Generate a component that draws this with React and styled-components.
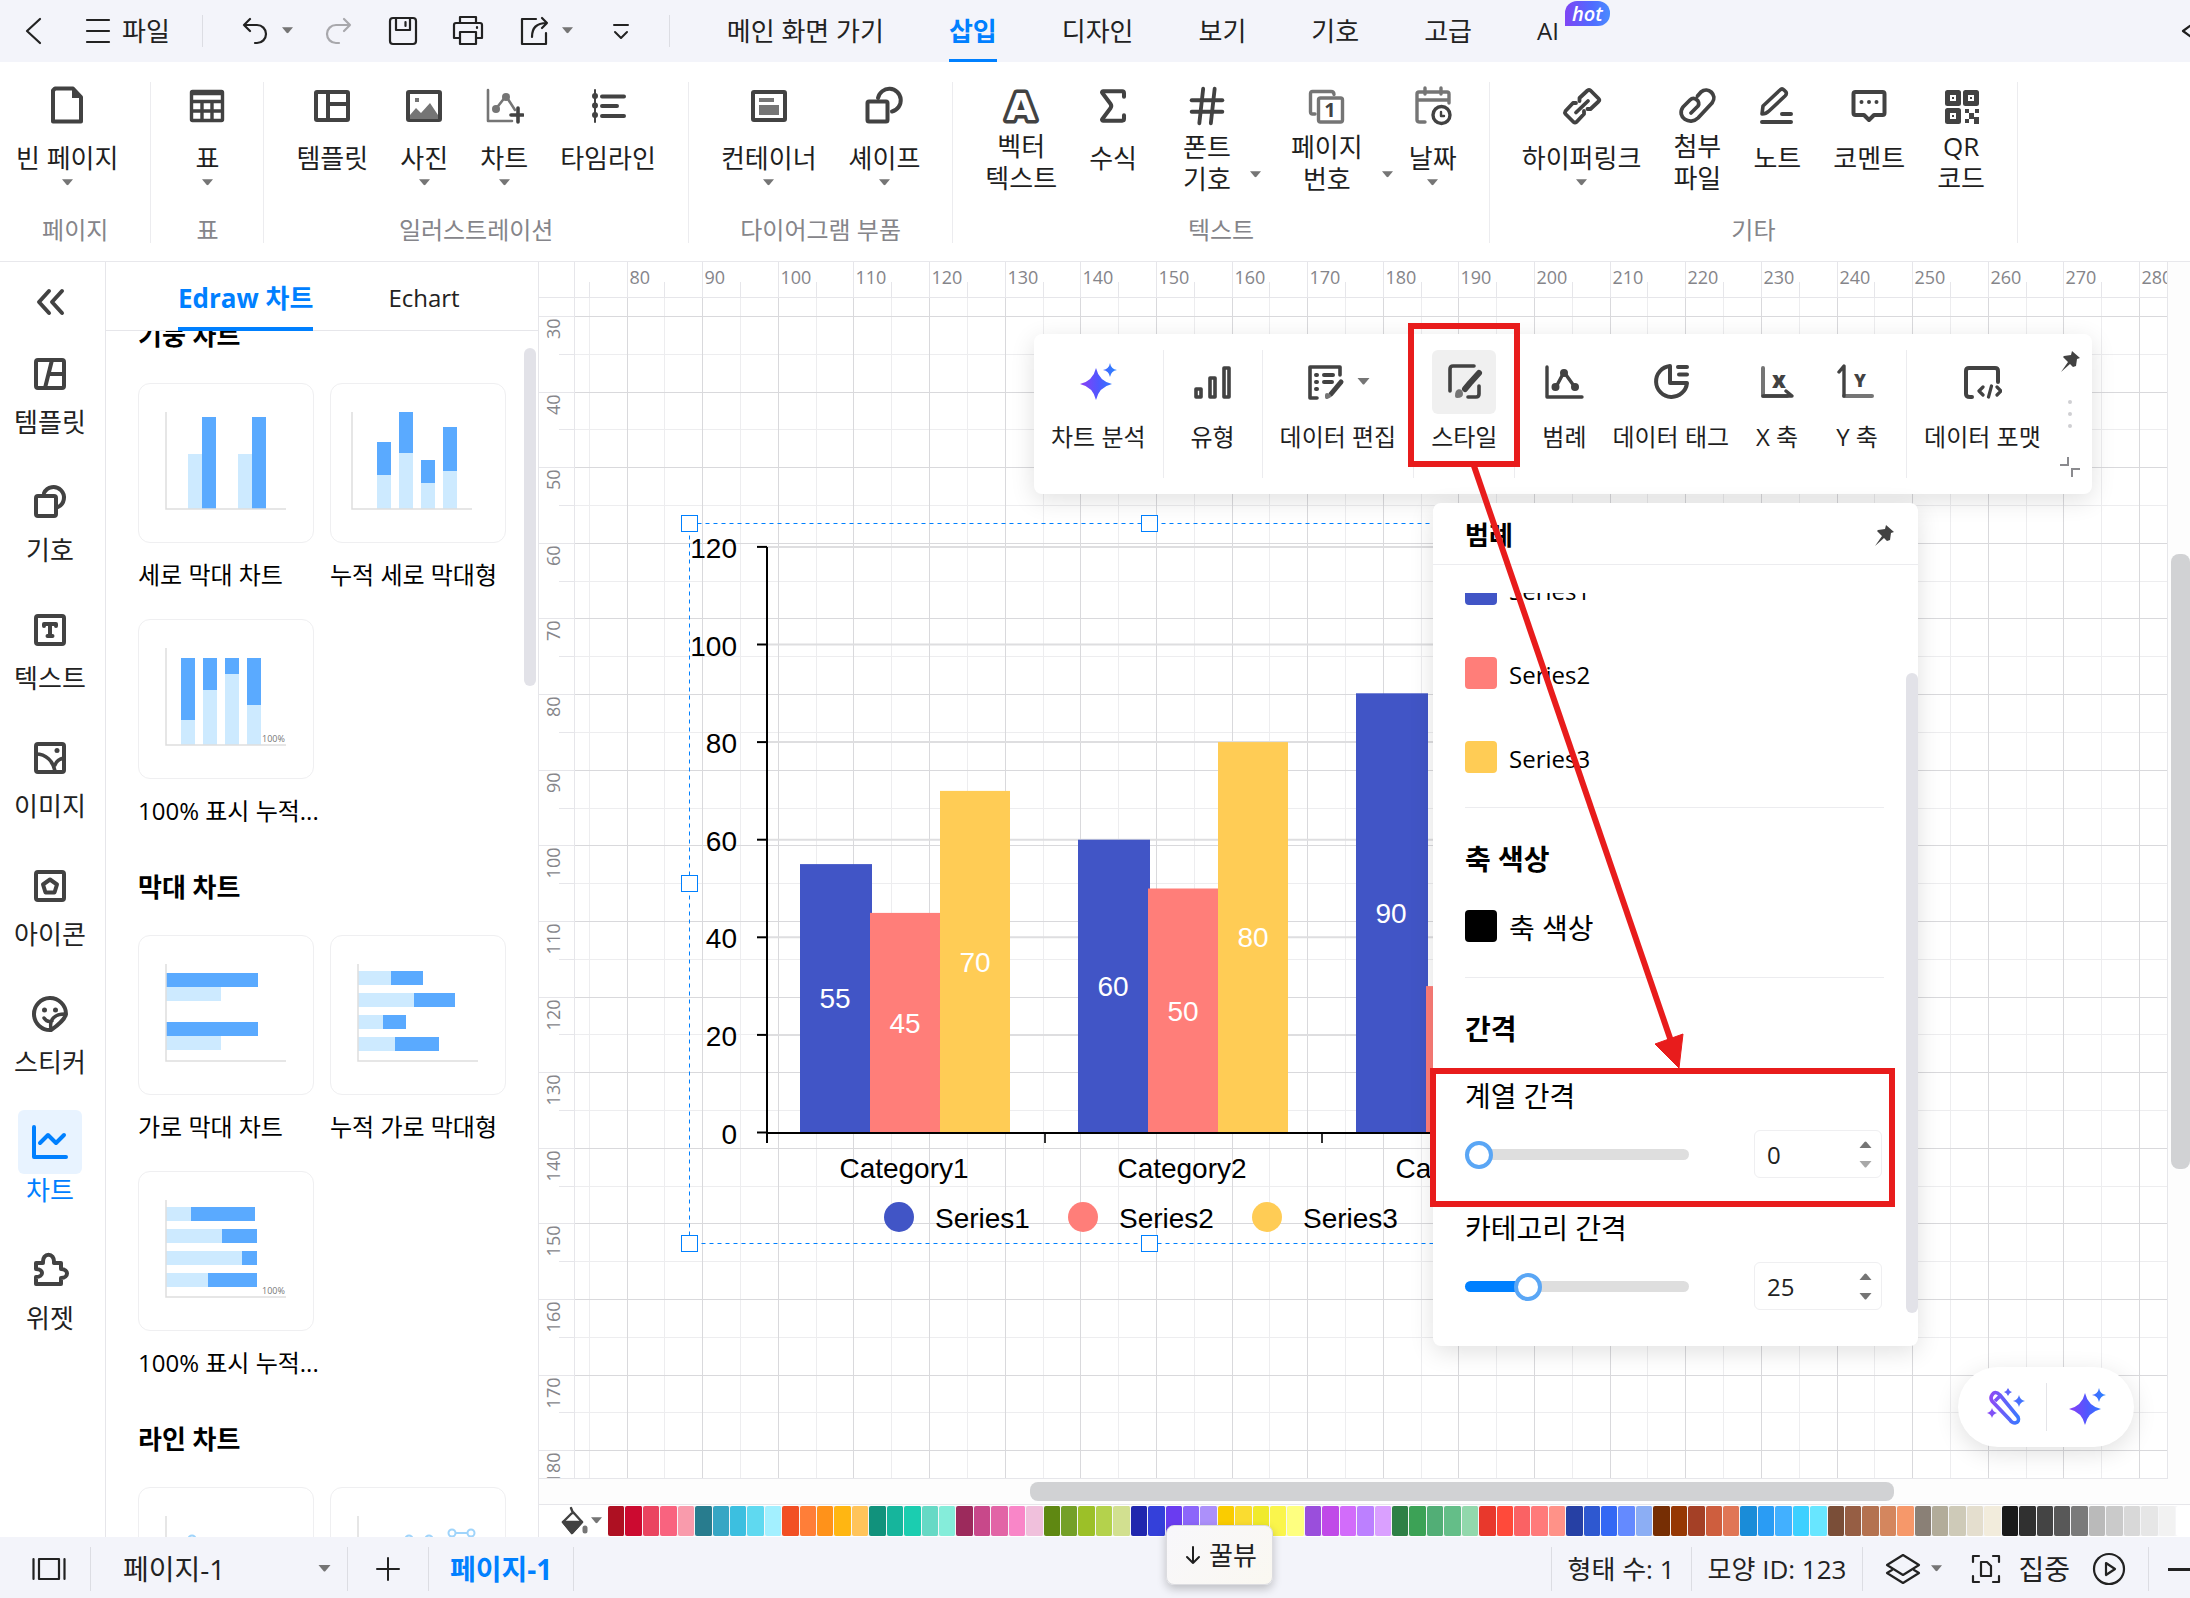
import React, { useState } from "react";
import styled, { createGlobalStyle, css } from "styled-components";
import { Hash, Sigma } from "lucide-react";

const GlobalStyle = createGlobalStyle`
  * {
    box-sizing: border-box;
  }

  body {
    margin: 0;
    background-color: #ffffff;
    color: #1f1f1f;
    font-family: "Open Sans", "Noto Sans CJK KR", sans-serif;
    font-size: 26px;
    line-height: 32px;
    overflow: hidden;
  }

  button, input, select {
    margin: 0;
    padding: 0;
    border: 0;
    background: none;
    color: inherit;
    font: inherit;
  }

  svg {
    display: block;
    flex-shrink: 0;
  }

  h2, h3 {
    margin: 0;
    font-size: 26px;
    font-weight: 700;
    color: #000000;
  }
`;

const StyledApp = styled.div`
  position: relative;
  display: flex;
  flex-direction: column;
  height: 100vh;
  overflow: hidden;
`;

/* ---------- title bar ---------- */

const StyledTitleBar = styled.header`
  display: flex;
  align-items: center;
  height: 62px;
  flex-shrink: 0;
  padding-left: 18px;
  background-color: #f3f4fa;
  overflow: hidden;
`;

const StyledIconButton = styled.button`
  display: flex;
  align-items: center;
  gap: ${(props) => props.$gap || 8}px;
  margin-right: ${(props) => props.$after || 0}px;
  color: ${(props) => (props.disabled ? "#a8a8ac" : "#222222")};
`;

const StyledBarDivider = styled.span`
  width: 1px;
  height: 32px;
  margin-right: ${(props) => props.$after}px;
  background-color: #dcdde3;
`;

const StyledTabs = styled.nav`
  display: flex;
  gap: 65px;
  height: 62px;
`;

const StyledTab = styled.a`
  display: flex;
  align-items: center;
  height: 62px;
  border-top: 3px solid transparent;
  border-bottom: 3px solid ${(props) => (props.$active ? "#0080ff" : "transparent")};
  color: ${(props) => (props.$active ? "#0080ff" : "#222222")};
  font-weight: ${(props) => (props.$active ? 700 : 400)};
  text-decoration: none;
  white-space: nowrap;
`;

const StyledAiTab = styled(StyledTab)`
  font-size: 24px;
`;

const StyledHot = styled.span`
  align-self: flex-start;
  margin: -2px 0 0 6px;
  padding: 0 7px;
  border-radius: 12px 12px 12px 0;
  background: linear-gradient(90deg, #7f45f5, #4f6bff 60%, #4a8cff);
  color: #ffffff;
  font-size: 20px;
  font-style: italic;
  font-weight: 600;
  line-height: 25px;
`;

const StyledEdge = styled.span`
  width: 10px;
  margin-left: auto;
  overflow: hidden;
`;

/* ---------- ribbon ---------- */

const StyledRibbon = styled.div`
  display: flex;
  align-items: flex-start;
  height: 200px;
  flex-shrink: 0;
  padding-top: 20px;
  border-bottom: 1px solid #e8e8ec;
`;

const StyledTools = styled.div`
  display: flex;
  padding: 0 16px;
`;

const StyledGroup = styled.section`
  display: flex;
  flex-direction: column;
  justify-content: space-between;
  height: 161px;
  border-right: 1px solid #ececef;

  &:first-child ${StyledTools} {
    padding-left: 0;
  }
`;

const StyledGroupTitle = styled.span`
  height: 26px;
  font-size: 24px;
  line-height: 26px;
  color: #85858a;
  text-align: center;
`;

const StyledTool = styled.button`
  display: flex;
  flex-direction: column;
  align-items: center;
  min-width: 80px;
  height: 118px;
  padding: 0 16px;
  white-space: pre-line;
`;

const StyledToolIcon = styled.span`
  display: flex;
  align-items: center;
  height: 46px;
  padding-top: 2px;
  color: #424242;
`;

const StyledToolLabel = styled.span`
  margin: ${(props) => (props.$double ? 2 : 14)}px 0 5px;
`;

const StyledSplitTool = styled(StyledTool)`
  display: grid;
  grid-template-columns: 30px auto 30px;
  grid-template-rows: 46px 72px;
  justify-items: center;
  padding: 0;

  & > ${StyledToolIcon} {
    grid-column: 2;
  }

  & > ${StyledToolLabel} {
    grid-column: 2;
    grid-row: 2;
  }

  & > svg {
    grid-column: 3;
    grid-row: 2;
    align-self: end;
    justify-self: end;
    margin-bottom: 21px;
  }
`;

/* ---------- left rail and gallery ---------- */

const StyledBody = styled.div`
  display: flex;
  flex: 1;
  min-height: 0;
`;

const StyledRail = styled.nav`
  display: flex;
  flex-direction: column;
  align-items: center;
  gap: 32px;
  width: 106px;
  flex-shrink: 0;
  padding: 25px 5px 0 0;
  border-right: 1px solid #e6e6ea;
`;

const StyledCollapse = styled.button`
  display: flex;
  margin-bottom: -7px;
  color: #424242;
`;

const StyledRailItem = styled.button`
  display: flex;
  flex-direction: column;
  align-items: center;
  white-space: nowrap;
  color: ${(props) => (props.$active ? "#0080ff" : "#222222")};
`;

const StyledRailIcon = styled.span`
  display: flex;
  align-items: center;
  justify-content: center;
  width: 64px;
  height: 64px;
  border-radius: 6px;
  background-color: ${(props) => (props.$active ? "#e8f3ff" : "transparent")};
  color: ${(props) => (props.$active ? "#0080ff" : "#424242")};
`;

const StyledGallery = styled.aside`
  display: flex;
  flex-direction: column;
  width: 433px;
  flex-shrink: 0;
  border-right: 1px solid #e6e6ea;
`;

const StyledGalleryTabs = styled.div`
  display: flex;
  gap: 75px;
  height: 69px;
  flex-shrink: 0;
  padding-left: 72px;
  border-bottom: 1px solid #e6e6ea;
`;

const StyledGalleryTab = styled.button`
  height: 69px;
  padding-top: 6px;
  border-bottom: 4px solid ${(props) => (props.$active ? "#0080ff" : "transparent")};
  color: ${(props) => (props.$active ? "#0080ff" : "#222222")};
  font-size: ${(props) => (props.$active ? 26 : 24)}px;
  font-weight: ${(props) => (props.$active ? 700 : 400)};
`;

const StyledGalleryScroll = styled.div`
  display: flex;
  flex: 1;
  min-height: 0;
  overflow: hidden;
`;

const StyledSections = styled.div`
  flex: 1;
  margin-top: -28px;
  padding-left: 32px;
`;

const StyledSectionTitle = styled.h3`
  margin-bottom: 16px;
  line-height: 64px;
`;

const StyledCards = styled.div`
  display: grid;
  grid-template-columns: 176px 176px;
  column-gap: 16px;
`;

const StyledCard = styled.button`
  display: flex;
  flex-direction: column;
  align-items: flex-start;
  gap: 16px;
  height: 236px;
  color: #000000;
  font-size: 24px;
  white-space: nowrap;
`;

const StyledThumb = styled.span`
  height: 160px;
  width: 176px;
  border: 1px solid #efeff1;
  border-radius: 12px;
`;

const StyledThumbScroll = styled.span`
  width: 12px;
  height: 338px;
  margin: 17px 2px 0 0;
  border-radius: 6px;
  background-color: #e2e2e8;
`;

/* ---------- canvas ---------- */

const StyledWork = styled.main`
  display: flex;
  flex-direction: column;
  flex: 1;
  min-width: 0;
`;

const StyledBoard = styled.div`
  position: relative;
  display: grid;
  grid-template-columns: 36px minmax(0, 1fr) 23px;
  grid-template-rows: 36px minmax(0, 1fr) 25px;
  flex: 1;
  min-height: 0;
  background-color: #fdfdfd;
`;

const StyledPane = styled.div`
  overflow: hidden;
  border-right: ${(props) => (props.$line ? "1px solid #e6e6ea" : "0")};
  border-bottom: 1px solid #e6e6ea;
  background-color: #ffffff;

  & > svg {
    width: 100%;
    height: 100%;
  }
`;

const StyledVTrack = styled.div`
  grid-row: 1 / 3;
  grid-column: 3;
  padding: 292px 0 0 3px;
  border-left: 1px solid #e6e6ea;
`;

const StyledVThumb = styled.div`
  height: 615px;
  border-radius: 8px;
  background-color: #d1d2d4;
`;

const StyledHTrack = styled.div`
  grid-column: 1 / 4;
  padding: 3px 296px 3px 491px;
`;

const StyledHThumb = styled.div`
  height: 19px;
  border-radius: 8px;
  background-color: #d1d2d4;
`;

const floating = css`
  position: absolute;
  background-color: #ffffff;
  box-shadow: 0 6px 24px rgba(0, 0, 0, 0.12);
`;

const StyledFloatBar = styled.div`
  ${floating};
  top: 72px;
  left: 495px;
  display: flex;
  padding: 16px 0;
  border-radius: 8px;
  font-size: 24px;
`;

const StyledFloatGroup = styled.div`
  display: flex;
  gap: 16px;
  height: 128px;
  padding: 0 17px;
  border-right: ${(props) => (props.$last ? "0" : "1px solid #ececef")};
`;

const StyledFloatTool = styled.button`
  display: flex;
  flex-direction: column;
  align-items: center;
  gap: 7px;
  min-width: 64px;
  height: 103px;
  white-space: nowrap;
`;

const StyledFloatIcon = styled.span`
  display: flex;
  align-items: center;
  justify-content: center;
  gap: 12px;
  min-width: 64px;
  height: 64px;
  border-radius: 6px;
  background-color: ${(props) => (props.$active ? "#f0f0f0" : "transparent")};
  color: #424242;
`;

const StyledFloatSide = styled.div`
  display: flex;
  flex-direction: column;
  align-items: center;
  justify-content: space-between;
  width: 34px;
  padding-right: 10px;
  color: #424242;
`;

const StyledPanel = styled.section`
  ${floating};
  top: 241px;
  left: 894px;
  width: 485px;
  height: 843px;
  display: flex;
  flex-direction: column;
  border-radius: 8px;
  color: #000000;
`;

const StyledPanelHead = styled.div`
  display: flex;
  align-items: center;
  justify-content: space-between;
  height: 62px;
  flex-shrink: 0;
  padding: 2px 23px 0 32px;
  border-bottom: 1px solid #ececef;
  color: #424242;
`;

const StyledPanelScroll = styled.div`
  display: flex;
  height: 720px;
  margin-top: 28px;
  overflow: hidden;
`;

const StyledPanelBody = styled.div`
  flex: 1;
  margin-top: -46px;
  padding: 0 22px 0 32px;
`;

const StyledSwatchRow = styled.div`
  display: flex;
  align-items: center;
  gap: 12px;
  height: ${(props) => (props.$compact ? 68 : 84)}px;
  font-size: ${(props) => (props.$compact ? 28 : 24)}px;
`;

const StyledSwatchName = styled.span`
  padding-top: 4px;
`;

const StyledSwatch = styled.button`
  width: 32px;
  height: 32px;
  border-radius: 4px;
  background-color: ${(props) => props.$color};
`;

const StyledRule = styled.hr`
  height: 1px;
  margin: ${(props) => props.$top}px 0 18px;
  border: 0;
  background-color: #ececef;
`;

const StyledPanelTitle = styled.h3`
  line-height: 66px;
  font-size: 28px;
`;

const StyledField = styled.div`
  display: flex;
  flex-direction: column;
  gap: 16px;
  margin: 16px 0 32px;
  font-size: 28px;
  line-height: 36px;
`;

const StyledFieldRow = styled.div`
  display: flex;
  align-items: center;
  justify-content: space-between;
  padding-right: 2px;
`;

const StyledRange = styled.input`
  appearance: none;
  width: 224px;
  height: 28px;

  &::-webkit-slider-runnable-track {
    height: 11px;
    border-radius: 6px;
    background: linear-gradient(90deg, #0080ff var(--fill), #dedede var(--fill));
  }

  &::-webkit-slider-thumb {
    appearance: none;
    width: 28px;
    height: 28px;
    margin-top: -8px;
    border: 4px solid #5aa6f5;
    border-radius: 50%;
    background-color: #ffffff;
  }
`;

const StyledSpin = styled.div`
  display: flex;
  align-items: center;
  justify-content: space-between;
  width: 128px;
  height: 48px;
  padding: 0 9px 0 12px;
  border: 1px solid #efeff1;
  border-radius: 6px;
  font-size: 24px;
`;

const StyledSpinInput = styled.input`
  appearance: textfield;
  width: 70px;
  padding-top: 2px;
  color: #222222;

  &::-webkit-inner-spin-button {
    appearance: none;
  }
`;

const StyledSpinArrows = styled.div`
  display: flex;
  flex-direction: column;
  gap: 13px;
`;

const StyledPanelThumb = styled.span`
  width: 12px;
  height: 640px;
  margin-top: 80px;
  border-radius: 6px;
  background-color: #e2e2e8;
`;

const StyledAiPill = styled.div`
  ${floating};
  right: 56px;
  bottom: 57px;
  display: flex;
  align-items: center;
  justify-content: center;
  gap: 20px;
  width: 176px;
  height: 80px;
  border-radius: 40px;
`;

const StyledPillDivider = styled.span`
  width: 1px;
  height: 48px;
  background-color: #e4e4e8;
`;

const StyledMarks = styled.svg`
  position: absolute;
  top: 0;
  left: 0;
  pointer-events: none;
`;

/* ---------- palette and status bar ---------- */

const StyledPalette = styled.div`
  display: flex;
  align-items: center;
  height: 33px;
  flex-shrink: 0;
  padding-left: 20px;
  border-top: 1px solid #e6e6ea;
  color: #424242;
`;

const StyledPaletteTrigger = styled.button`
  display: flex;
  align-items: center;
  gap: 2px;
  width: 49px;
`;

const StyledColors = styled.div`
  display: flex;
  flex: 1;
  margin-right: -3px;
  background-color: #f6f6f8;
`;

const StyledColor = styled.button`
  flex: 1;
  height: 30px;
  border-right: 1px solid #f6f6f8;
  border-radius: 2px;
  background-color: ${(props) => props.$color};
`;

const StyledStatus = styled.footer`
  display: flex;
  align-items: center;
  height: 61px;
  flex-shrink: 0;
  padding-top: 3px;
  background-color: #f3f4fa;
  color: #222222;
  overflow: hidden;
`;

const StyledStatusCell = styled.div`
  display: flex;
  align-items: center;
  height: 44px;
  padding: 0 ${(props) => props.$pad}px;
  border-right: 1px solid #dcdde3;
  white-space: nowrap;
`;

const StyledViewCell = styled(StyledStatusCell)`
  width: 91px;
  padding: 0 0 0 32px;
`;

const StyledPageSelectCell = styled(StyledStatusCell)`
  width: 257px;
  padding: 0 16px 0 32px;
`;

const StyledSelect = styled.select`
  appearance: none;
  flex: 1;
  font-size: 28px;
`;

const StyledPageTab = styled.a`
  color: #0080ff;
  font-size: 28px;
  font-weight: 700;
  text-decoration: none;
`;

const StyledStatusRight = styled.div`
  display: flex;
  align-items: center;
  margin-left: auto;
  border-left: 1px solid #dcdde3;
`;

const StyledStatusTools = styled(StyledStatusCell)`
  padding: 0 22px;
`;

const StyledFocusButton = styled(StyledIconButton)`
  margin: 0 22px 0 29px;
  font-size: 28px;
`;

const StyledMinus = styled.span`
  width: 22px;
  height: 3px;
  margin-left: 19px;
  background-color: #222222;
`;

const StyledKeyHint = styled.div`
  position: absolute;
  bottom: 13px;
  left: 1166px;
  display: flex;
  align-items: center;
  gap: 5px;
  height: 60px;
  padding: 0 15px;
  border: 1px solid #dcdce0;
  border-radius: 8px;
  background: linear-gradient(135deg, #f8f7fb, #faf8f1);
  box-shadow: 0 4px 10px rgba(0, 0, 0, 0.22);
`;

/* ---------- icons ---------- */

const Glyph = ({ size = 40, stroke = 4, box = 40, children }) => (
  <svg
    width={size}
    height={size}
    viewBox={`0 0 ${box} ${box}`}
    fill="none"
    stroke="currentColor"
    strokeWidth={stroke}
    strokeLinecap="round"
    strokeLinejoin="round"
    aria-hidden="true"
  >
    {children}
  </svg>
);

const Caret = ({ up, color = "#757575", w = 11 }) => (
  <svg width={w} height="8" viewBox="0 0 12 8" aria-hidden="true">
    <path d={up ? "M0 8L5 2q1-1 2 0l5 6z" : "M0 0h12L7 6q-1 1-2 0z"} fill={color} />
  </svg>
);

const GREY = "#757575";

const icons = {
  page: (
    <Glyph>
      <path d="M8 2.500h18L34 11v24.500H6V4.500z" />
      <path d="M25 2l9 10h-9z" fill="currentColor" stroke="none" />
    </Glyph>
  ),
  table: (
    <Glyph stroke={3.4}>
      <rect x="4.500" y="5.500" width="31" height="29" rx="1" />
      <path d="M5 7.500h30M5 15.500h30M5 25h30M15 16v18M25 16v18" />
    </Glyph>
  ),
  template: (
    <Glyph>
      <rect x="4" y="6" width="32" height="28" rx="1" />
      <path d="M16 6v28M16 18h20" />
    </Glyph>
  ),
  photo: (
    <Glyph>
      <rect x="4" y="6" width="32" height="28" rx="1" />
      <path d="M6 33v-4l6-7 5 5 9-10 8 12v4z" fill={GREY} stroke="none" />
      <path d="M11 12h4v4h-4z" fill={GREY} stroke="none" />
    </Glyph>
  ),
  chartAdd: (
    <Glyph>
      <path d="M4 4v31h24M11 24L22 10l9 14" stroke={GREY} strokeWidth="2.600" />
      <circle cx="12" cy="23" r="4" fill={GREY} stroke="none" />
      <circle cx="22" cy="11" r="4" fill={GREY} stroke="none" />
      <path d="M34 22v14M27 29h12" strokeWidth="3.600" />
    </Glyph>
  ),
  timeline: (
    <Glyph>
      <path d="M7 4v32" strokeWidth="2" />
      <path d="M7 10v.1M7 19.500v.1M7 29v.1" strokeWidth="6" />
      <path d="M14 10.500h22M14 20h15M14 30h22" />
    </Glyph>
  ),
  container: (
    <Glyph>
      <rect x="4" y="6" width="32" height="28" rx="1" />
      <path d="M10 12h15v4H10zM10 19h20v10H10z" fill={GREY} stroke="none" />
    </Glyph>
  ),
  shapes: (
    <Glyph>
      <rect x="3.500" y="15.500" width="20" height="20" rx="1.500" />
      <path d="M14 12a11.500 11.500 0 1 1 14 13.500" />
    </Glyph>
  ),
  vector: (
    <Glyph size={44} box={44} stroke={7}>
      <text
        x="22"
        y="36"
        textAnchor="middle"
        fontFamily="DejaVu Sans"
        fontWeight="700"
        fontSize="38"
        fill="#ffffff"
        paintOrder="stroke"
      >
        A
      </text>
    </Glyph>
  ),
  sigma: <Sigma size={44} strokeWidth={2.200} />,
  hash: <Hash size={46} strokeWidth={2} />,
  pageNo: (
    <Glyph stroke={3.400}>
      <path d="M8 28H5.500q-2 0-2-2V7.500q0-2 2-2H24q3 0 3 3" stroke={GREY} />
      <rect x="11.500" y="12" width="24" height="24" rx="2" stroke={GREY} />
      <text x="23" y="31" textAnchor="middle" fontSize="20" fontWeight="700" fill="currentColor" stroke="none">
        1
      </text>
    </Glyph>
  ),
  date: (
    <Glyph stroke={3.400}>
      <path d="M12 36H7q-3 0-3-2V8q0-2 2-2h28q2 0 2 2v9M5 14h30M12 2v6M28 2v6" stroke={GREY} />
      <circle cx="28.500" cy="29" r="8.500" />
      <path d="M28 26v4h3" strokeWidth="2.400" />
    </Glyph>
  ),
  link: (
    <Glyph stroke={3.800}>
      <path d="M17.500 15v-3l8-7.500q1.500-1 3 0l8 8q1.500 1.500 0 3l-8 7.500h-3" />
      <path d="M14 17h-3l-7.500 8q-1 1.500 0 3l8 8q1.500 1 3 0l7.500-8v-3" />
      <path d="M26 15L14 26.500" />
    </Glyph>
  ),
  clip: (
    <Glyph stroke={3.800}>
      <path d="M20.500 10l3.500-4c7-6 17 3 11 11L21 32c-8 8-22-1-15-11l7-7c4-4 11 1 8 6l-7 7" />
    </Glyph>
  ),
  pen: (
    <Glyph>
      <path d="M5 28l1-8L23 4q2-2 4 0l2 2q1 2-1 4L12 25q-3 3-7 3z" strokeWidth="3.600" />
      <path d="M25 28h9M5 36h29" />
    </Glyph>
  ),
  comment: (
    <Glyph>
      <path d="M6.500 6h27q2 0 2 2v19q0 2-2 2H25l-5 5-5-5H6.500q-2 0-2-2V8q0-2 2-2z" />
      <path d="M12.500 16v.1M20 16v.1M27.500 16v.1" strokeWidth="4" />
    </Glyph>
  ),
  qr: (
    <Glyph stroke={5}>
      <path d="M6.500 6.500h11v11h-11zM24.500 6.500h11v11h-11zM6.500 24.500h11v11h-11z" />
      <path
        d="M11 11h2v2h-2zM29 11h2v2h-2zM11 29h2v2h-2zM24 23h4v4h-4zM34 23h4v4h-4zM28 27h5v6h-5zM24 33h4v4h-4zM33 31h5v7h-5z"
        fill="currentColor"
        stroke="none"
      />
    </Glyph>
  ),
  railTemplate: (
    <Glyph>
      <rect x="6" y="6" width="28" height="28" rx="2" />
      <path d="M22 6l-7 28M19 20h15" />
    </Glyph>
  ),
  railShapes: (
    <Glyph>
      <rect x="6" y="14" width="20" height="20" rx="2" />
      <path d="M14 11a10.500 10.500 0 1 1 14 14" />
    </Glyph>
  ),
  railText: (
    <Glyph>
      <rect x="6" y="6" width="28" height="28" rx="2" />
      <path d="M14 16v-2h12v2M20 14v12M17.500 26h5" strokeWidth="4" />
    </Glyph>
  ),
  railImage: (
    <Glyph>
      <rect x="6" y="6" width="28" height="28" rx="2" />
      <path d="M6 16c10 0 17 7 19 17M25 27c1-3 4-6 9-7" strokeWidth="3.600" />
      <path d="M27 12.500v.1" strokeWidth="5" />
    </Glyph>
  ),
  railIcon: (
    <Glyph>
      <rect x="6" y="6" width="28" height="28" rx="2" />
      <path d="M20 13.500l7 5-2.500 8h-9l-2.500-8z" strokeWidth="4" />
    </Glyph>
  ),
  railSticker: (
    <Glyph>
      <path d="M21 36A16 16 0 1 1 36 20c-1 5-9 12-15 16z" />
      <path d="M21 35c-2-10 4-15 14-15M14 24c2 3 5 4 8 3" strokeWidth="3.400" />
      <path d="M14.500 16v.1M25.500 16v.1" strokeWidth="5" />
    </Glyph>
  ),
  railChart: (
    <Glyph>
      <path d="M4 5v30h32" />
      <path d="M10 21l8-8 8 8 8-8" />
    </Glyph>
  ),
  railWidget: (
    <Glyph>
      <path d="M6 13h7c-1-11 12-11 11 0h7v6c8 0 8 9 0 9v6H6v-7c8 0 8-8 0-8z" />
    </Glyph>
  ),
  bars: (
    <Glyph stroke={3.600}>
      <path d="M3 27h5v8H3zM17 16h5v19h-5zM31 6h5v29h-5z" />
    </Glyph>
  ),
  dataEdit: (
    <Glyph stroke={3.600}>
      <path d="M12 36H5V5h30v8" />
      <path d="M11 13h1M11 20h1M11 27h1M19 13h9M19 20h8" strokeWidth="4" />
      <path d="M36 20L26 32" strokeWidth="5" />
      <path d="M22 35v-2l2 1z" stroke={GREY} strokeWidth="4" />
    </Glyph>
  ),
  style: (
    <Glyph stroke={3.600}>
      <path d="M6 29V7q0-3 3-3h21M35 24v8q0 3-3 3h-8" />
      <path d="M35 11l-9 10-5 6" strokeWidth="6" />
      <path d="M13 34c0-6 4-6 4-2 0 2-2 2-4 2z" stroke={GREY} strokeWidth="4" />
    </Glyph>
  ),
  legend: (
    <Glyph stroke={3.400}>
      <path d="M3 5v30h35M12 25l8-15 10 14" />
      <path d="M11.500 25v.1M20 11v.1M31 25v.1" strokeWidth="8" />
    </Glyph>
  ),
  tag: (
    <Glyph>
      <path d="M19 4A15.500 15.500 0 1 0 36 21H19zM27 5h9M28 12.500h8" />
    </Glyph>
  ),
  xAxis: (
    <Glyph>
      <path d="M6 6v28h24" stroke={GREY} />
      <path d="M6 34h29l-6-5" strokeWidth="3.400" />
      <text x="22" y="26" textAnchor="middle" fontSize="22" fontWeight="800" fill="currentColor" stroke="none">
        x
      </text>
    </Glyph>
  ),
  yAxis: (
    <Glyph>
      <path d="M7 34h28" stroke={GREY} />
      <path d="M2 10l5-6v30" strokeWidth="3.400" />
      <text x="23" y="25" textAnchor="middle" fontSize="18" fontWeight="800" fill="currentColor" stroke="none">
        Y
      </text>
    </Glyph>
  ),
  format: (
    <Glyph>
      <path d="M10 35H8q-4 0-4-3V9q0-3 3-3h26q3 0 3 3v11" />
      <path d="M21 25l-4 4 4 4M35 25l4 4-4 4M29.500 24l-3 11" strokeWidth="3.200" />
    </Glyph>
  ),
};

const Sparkle = ({ id }) => (
  <svg width="40" height="40" viewBox="0 0 40 40" aria-hidden="true">
    <defs>
      <linearGradient id={id}>
        <stop offset="0" stopColor="#8c3df5" />
        <stop offset="0.500" stopColor="#4f58ff" />
        <stop offset="1" stopColor="#2a86ff" />
      </linearGradient>
    </defs>
    <path
      fill={`url(#${id})`}
      d="M18 6q3 13 16 16-13 3-16 16-3-13-16-16Q15 19 18 6zM32 1q1 6 7 7-6 1-7 7-1-6-7-7 6-1 7-7z"
    />
  </svg>
);

const Wand = () => (
  <svg width="40" height="40" viewBox="0 0 40 40" aria-hidden="true">
    <defs>
      <linearGradient id="wand">
        <stop offset="0" stopColor="#8c4bf5" />
        <stop offset="1" stopColor="#3a78ff" />
      </linearGradient>
    </defs>
    <path
      d="M6 8q3-5 8 0l18 22q2 5-3 6-3 0-5-3L6 14q-2-3 0-6zM9 14l5-5"
      fill="none"
      stroke="url(#wand)"
      strokeWidth="3.600"
    />
    <path
      fill="url(#wand)"
      d="M22 1q1 3 4 4-3 1-4 4-1-3-4-4 3-1 4-4zM33 8q1 5 6 6-5 1-6 6-1-5-6-6 5-1 6-6zM6 21q1 4 5 5-4 1-5 5-1-4-5-5 4-1 5-5z"
    />
  </svg>
);

const Pin = () => (
  <svg width="22" height="22" viewBox="0 0 22 22" aria-hidden="true">
    <path d="M13 1l8 7-3 1-1 7-3 1-3-3-9 8 7-10-5-5 1-1 7-1z" fill="currentColor" />
  </svg>
);

/* ---------- data ---------- */

const ribbon = [
  { title: "페이지", tools: [["page", "빈 페이지", "caret"]] },
  { title: "표", tools: [["table", "표", "caret"]] },
  {
    title: "일러스트레이션",
    tools: [
      ["template", "템플릿"],
      ["photo", "사진", "caret"],
      ["chartAdd", "차트", "caret"],
      ["timeline", "타임라인"],
    ],
  },
  {
    title: "다이어그램 부품",
    tools: [
      ["container", "컨테이너", "caret"],
      ["shapes", "셰이프", "caret"],
    ],
  },
  {
    title: "텍스트",
    tools: [
      ["vector", "벡터\n텍스트"],
      ["sigma", "수식"],
      ["hash", "폰트\n기호", "split"],
      ["pageNo", "페이지\n번호", "split"],
      ["date", "날짜", "caret"],
    ],
  },
  {
    title: "기타",
    tools: [
      ["link", "하이퍼링크", "caret"],
      ["clip", "첨부\n파일"],
      ["pen", "노트"],
      ["comment", "코멘트"],
      ["qr", "QR\n코드"],
    ],
  },
];

const rail = [
  ["railTemplate", "템플릿"],
  ["railShapes", "기호"],
  ["railText", "텍스트"],
  ["railImage", "이미지"],
  ["railIcon", "아이콘"],
  ["railSticker", "스티커"],
  ["railChart", "차트"],
  ["railWidget", "위젯"],
];

// bars: x, y, width, height, dark
const gallery = [
  {
    title: "기둥 차트",
    cards: [
      {
        label: "세로 막대 차트",
        bars: [[50, 71, 14, 55], [64, 34, 14, 92, 1], [100, 71, 14, 55], [114, 34, 14, 92, 1]],
      },
      {
        label: "누적 세로 막대형",
        left: 22,
        bars: [
          [47, 59, 14, 33, 1], [47, 92, 14, 34], [69, 29, 14, 41, 1], [69, 70, 14, 56],
          [91, 77, 14, 23, 1], [91, 100, 14, 26], [113, 44, 14, 44, 1], [113, 88, 14, 38],
        ],
      },
      {
        label: "100% 표시 누적...",
        percent: true,
        bars: [
          [43, 39, 14, 62, 1], [43, 101, 14, 25], [65, 39, 14, 32, 1], [65, 71, 14, 55],
          [87, 39, 14, 16, 1], [87, 55, 14, 71], [109, 39, 14, 47, 1], [109, 86, 14, 40],
        ],
      },
    ],
  },
  {
    title: "막대 차트",
    cards: [
      {
        label: "가로 막대 차트",
        bars: [[28, 38, 92, 14, 1], [28, 52, 55, 14], [28, 87, 92, 14, 1], [28, 101, 55, 14]],
      },
      {
        label: "누적 가로 막대형",
        bars: [
          [28, 36, 33, 14], [61, 36, 32, 14, 1], [28, 58, 56, 14], [84, 58, 41, 14, 1],
          [28, 80, 25, 14], [53, 80, 23, 14, 1], [28, 102, 37, 14], [65, 102, 44, 14, 1],
        ],
      },
      {
        label: "100% 표시 누적...",
        percent: true,
        bars: [
          [28, 36, 25, 14], [53, 36, 64, 14, 1], [28, 58, 56, 14], [84, 58, 35, 14, 1],
          [28, 80, 76, 14], [104, 80, 15, 14, 1], [28, 102, 42, 14], [70, 102, 49, 14, 1],
        ],
      },
    ],
  },
  {
    title: "라인 차트",
    cards: [
      { bars: [], dots: [[54, 52]] },
      { bars: [], dots: [[79, 52], [99, 52], [122, 46], [141, 46]] },
    ],
  },
];

const palette = (
  "ae1022 cc0a30 ea4460 f9637f f99bac 287c8e 36a6c4 3cbfe0 5fd9f0 a3f0ff f24f24 ff7e38 ff921a ffb612 ffc45a " +
  "11927c 16b59c 1bcdb0 66d9c5 85edda 9c2a5c c8488a e264a6 f986c8 f0c0dc 5f8812 74a028 9cc028 b4d24c d2e090 " +
  "2026ae 3440da 6a3cf0 8c66fa ac90fa facc00 fadc30 f0ea2c faf54c feff80 9a4edc c04ae8 d26cfa bc80ff daa0ff " +
  "2e8046 3ca256 52ae76 64be88 92d8ac e8382c ff4a3a fa6264 ff7a7a ff9288 2640a4 2e58d0 3468f4 648aff 8caef4 " +
  "762e04 963804 a44026 ce5e3e e07656 1a8cd8 2a9cf4 42b0ff 3cd0ff 68e6ff 7a4e38 965e44 b47250 d4865e f6986a " +
  "8a8076 b2ac9a cecab8 e4dece f2ecdc 1a1a1a 303030 444444 585858 7a7a7a bababa cacaca d8d8d8 e6e6e6 f2f2f2 ffffff"
).split(" ");

const seriesColors = ["#4155c6", "#ff7e79", "#ffcc55"];
const categories = [
  [55, 45, 70],
  [60, 50, 80],
  [90, 30, 60],
];

/* ---------- drawings ---------- */

const Thumb = ({ bars, left = 28, percent, dots = [] }) => (
  <svg width="174" height="158" viewBox="1 1 174 158" aria-hidden="true">
    {bars.map(([x, y, w, h, dark]) => (
      <rect key={`${x}-${y}`} x={x} y={y} width={w} height={h} fill={dark ? "#5aaaff" : "#cdeaff"} />
    ))}
    <path d={`M${left} 29v97H${left + 120}`} fill="none" stroke="#dedede" strokeWidth="1.500" />
    {percent && (
      <text x="124" y="123" fontSize="9" fill="#777777">
        100%
      </text>
    )}
    {dots.length > 2 && <path d="M122 46h19" stroke="#9fd4fb" strokeWidth="2" />}
    {dots.map(([x, y]) => (
      <circle key={x} cx={x} cy={y} r="3.500" fill="#ffffff" stroke="#9fd4fb" strokeWidth="2" />
    ))}
  </svg>
);

// ten ruler units on screen
const STEP = 75.62;
const steps = Array.from({ length: 60 }, (_, i) => i);
const lineX = (i) => Math.round(51.6 + (i * STEP) / 2) + 0.5;
const lineY = (i) => Math.round(18 + (i * STEP) / 2) + 0.5;

const TopRuler = () => (
  <svg>
    {steps.slice(0, 43).map((n) => {
      const i = n - 1;
      return (
        <g key={n}>
          <path d={`M${lineX(i)} ${i % 2 ? 20 : 0}V36`} stroke="#e6e6ea" />
          {i % 2 === 0 && (
            <text x={lineX(i) + 2} y="22" fontSize="18" fill="#85858a">
              {80 + i * 5}
            </text>
          )}
        </g>
      );
    })}
  </svg>
);

const LeftRuler = () => (
  <svg>
    {steps.slice(0, 31).map((i) => (
      <g key={i}>
        <path d={`M${i % 2 ? 20 : 0} ${lineY(i)}H36`} stroke="#e6e6ea" />
        {i % 2 === 0 && (
          <text
            transform={`translate(21 ${lineY(i) + 2}) rotate(-90)`}
            textAnchor="end"
            fontSize="18"
            fill="#85858a"
          >
            {30 + i * 5}
          </text>
        )}
      </g>
    ))}
  </svg>
);

const ZERO = 834.5;
const UNIT = 4.88;
const valueY = (v) => ZERO - v * UNIT;

const Handle = ({ x, y }) => <rect x={x - 8} y={y - 8} width="16" height="16" fill="#ffffff" stroke="#0080ff" />;

const Sheet = () => (
  <svg>
    <path d={`M${lineX(-1)} 0v2000`} stroke="#ededef" />
    {steps
      .filter((i) => i % 2)
      .map((i) => (
        <path key={i} d={`M${lineX(i)} 0v2000M0 ${lineY(i)}h3000`} stroke="#ededef" />
      ))}
    {steps
      .filter((i) => i % 2 === 0)
      .map((i) => (
        <path key={i} d={`M${lineX(i)} 0v2000M0 ${lineY(i)}h3000`} stroke="#d9d9dc" />
      ))}
    <rect x="114.500" y="225.500" width="920" height="720" fill="none" stroke="#0080ff" strokeDasharray="4 4" />
    <g fontFamily="Liberation Sans" fontSize="28" fill="#000000">
      {[120, 100, 80, 60, 40, 20, 0].map((v) => (
        <g key={v}>
          {v > 0 && <path d={`M192 ${valueY(v)}H1025`} stroke="#dedee0" strokeWidth="2" />}
          <path d={`M182 ${valueY(v)}h10`} stroke="#000000" strokeWidth="2" />
          <text x="162" y={valueY(v) + 11} textAnchor="end">
            {v}
          </text>
        </g>
      ))}
      {categories.map((values, c) => (
        <g key={c}>
          {values.map((v, s) => (
            <g key={s}>
              <rect
                x={225 + c * 278 + s * 70}
                y={valueY(v)}
                width={s === 0 ? 72 : 70}
                height={v * UNIT}
                fill={seriesColors[s]}
              />
              <text x={260 + c * 278 + s * 70} y={valueY(v / 2) + 10} textAnchor="middle" fill="#ffffff">
                {v}
              </text>
            </g>
          ))}
          <text x={329 + c * 278} y="880" textAnchor="middle">{`Category${c + 1}`}</text>
          <path d={`M${470 + c * 277} 835v10`} stroke="#333333" strokeWidth="2" />
        </g>
      ))}
      <path d="M192 249v596M192 835h833" stroke="#000000" strokeWidth="2" />
      {seriesColors.map((color, i) => (
        <g key={color}>
          <circle cx={324 + i * 184} cy="919" r="15" fill={color} />
          <text x={360 + i * 184} y="930">{`Series${i + 1}`}</text>
        </g>
      ))}
    </g>
    <Handle x={114.5} y={225.5} />
    <Handle x={574.5} y={225.5} />
    <Handle x={114.5} y={585.5} />
    <Handle x={114.5} y={945.5} />
    <Handle x={574.5} y={945.5} />
  </svg>
);

/* ---------- parts ---------- */

const Tool = ({ icon, label, mode }) => {
  const Wrapper = mode === "split" ? StyledSplitTool : StyledTool;
  return (
    <Wrapper type="button">
      <StyledToolIcon>{icons[icon]}</StyledToolIcon>
      <StyledToolLabel $double={label.includes("\n")}>{label}</StyledToolLabel>
      {mode && <Caret />}
    </Wrapper>
  );
};

const FloatTool = ({ icon, label, active, caret, children }) => (
  <StyledFloatTool type="button">
    <StyledFloatIcon $active={active}>
      {children || icons[icon]}
      {caret && <Caret w={13} />}
    </StyledFloatIcon>
    {label}
  </StyledFloatTool>
);

const GapField = ({ id, label, start, max }) => {
  const [value, setValue] = useState(start);
  const update = (next) => setValue(Math.min(max, Math.max(0, Number(next))));
  return (
    <StyledField>
      <label htmlFor={id}>{label}</label>
      <StyledFieldRow>
        <StyledRange
          id={id}
          type="range"
          max={max}
          value={value}
          style={{ "--fill": `${(value / max) * 100}%` }}
          onChange={(e) => update(e.target.value)}
        />
        <StyledSpin>
          <StyledSpinInput
            type="number"
            aria-label={label}
            value={value}
            onChange={(e) => update(e.target.value)}
          />
          <StyledSpinArrows>
            <button type="button" aria-label="증가" onClick={() => update(value + 1)}>
              <Caret up w={13} />
            </button>
            <button type="button" aria-label="감소" onClick={() => update(value - 1)}>
              <Caret color={value ? "#757575" : "#a8a8a8"} w={13} />
            </button>
          </StyledSpinArrows>
        </StyledSpin>
      </StyledFieldRow>
    </StyledField>
  );
};

const TitleBar = () => (
  <StyledTitleBar>
    <StyledIconButton type="button" aria-label="뒤로" $after={36}>
      <Glyph size={30} box={30} stroke={2.200}>
        <path d="M22 3L9 15l13 12" />
      </Glyph>
    </StyledIconButton>
    <StyledIconButton type="button" $after={32}>
      <Glyph size={30} box={30} stroke={2.200}>
        <path d="M3 4h22M3 15h22M3 26h22" />
      </Glyph>
      파일
    </StyledIconButton>
    <StyledBarDivider $after={37} />
    <StyledIconButton type="button" aria-label="실행 취소" $gap={12} $after={31}>
      <Glyph size={30} box={30} stroke={2.200}>
        <path d="M10 3L4 9l6 6M4 9h13a9 9 0 0 1 0 18h-2" />
      </Glyph>
      <Caret />
    </StyledIconButton>
    <StyledIconButton type="button" aria-label="다시 실행" $after={34} disabled>
      <Glyph size={30} box={30} stroke={2.200}>
        <path d="M20 3l6 6-6 6M26 9H12a9 9 0 0 0 0 18h3" />
      </Glyph>
    </StyledIconButton>
    <StyledIconButton type="button" aria-label="저장" $after={34}>
      <Glyph size={30} box={30} stroke={2.200}>
        <rect x="2" y="2" width="26" height="26" rx="3" />
        <path d="M8 2v12h14V2M17.500 6v4" />
      </Glyph>
    </StyledIconButton>
    <StyledIconButton type="button" aria-label="인쇄" $after={36}>
      <Glyph size={32} box={32} stroke={2.200}>
        <path d="M8 8V2h16v6M8 23H2V10q0-2 2-2h24q2 0 2 2v13h-6" />
        <path d="M8 17h16v12H8zM25 12v1" />
      </Glyph>
    </StyledIconButton>
    <StyledIconButton type="button" aria-label="내보내기" $gap={12} $after={35}>
      <Glyph size={30} box={30} stroke={2.200}>
        <path d="M16 3H2v25h24V17M12 21c0-9 4-14 15-14M22 2l5 5-5 5" />
      </Glyph>
      <Caret />
    </StyledIconButton>
    <StyledIconButton type="button" aria-label="더 보기" $after={35}>
      <Glyph size={26} box={26} stroke={2}>
        <path d="M6 7h14M7 14l6 6 6-6" />
      </Glyph>
    </StyledIconButton>
    <StyledBarDivider $after={57} />
    <StyledTabs>
      <StyledTab href="#home">메인 화면 가기</StyledTab>
      <StyledTab href="#insert" $active>
        삽입
      </StyledTab>
      <StyledTab href="#design">디자인</StyledTab>
      <StyledTab href="#view">보기</StyledTab>
      <StyledTab href="#symbol">기호</StyledTab>
      <StyledTab href="#advanced">고급</StyledTab>
      <StyledAiTab href="#ai">
        AI <StyledHot>hot</StyledHot>
      </StyledAiTab>
    </StyledTabs>
    <StyledEdge>
      <Glyph size={24} box={24} stroke={2.200}>
        <path d="M10 7l-7 5 7 5" />
      </Glyph>
    </StyledEdge>
  </StyledTitleBar>
);

const Gallery = () => (
  <StyledGallery>
    <StyledGalleryTabs>
      <StyledGalleryTab type="button" $active>
        Edraw 차트
      </StyledGalleryTab>
      <StyledGalleryTab type="button">Echart</StyledGalleryTab>
    </StyledGalleryTabs>
    <StyledGalleryScroll>
      <StyledSections>
        {gallery.map((section) => (
          <section key={section.title}>
            <StyledSectionTitle>{section.title}</StyledSectionTitle>
            <StyledCards>
              {section.cards.map((card, i) => (
                <StyledCard type="button" key={i} aria-label={card.label || section.title}>
                  <StyledThumb>
                    <Thumb {...card} />
                  </StyledThumb>
                  {card.label}
                </StyledCard>
              ))}
            </StyledCards>
          </section>
        ))}
      </StyledSections>
      <StyledThumbScroll />
    </StyledGalleryScroll>
  </StyledGallery>
);

const FloatBar = () => (
  <StyledFloatBar>
    <StyledFloatGroup>
      <FloatTool label="차트 분석">
        <Sparkle id="analyse" />
      </FloatTool>
    </StyledFloatGroup>
    <StyledFloatGroup>
      <FloatTool icon="bars" label="유형" />
    </StyledFloatGroup>
    <StyledFloatGroup>
      <FloatTool icon="dataEdit" label="데이터 편집" caret />
    </StyledFloatGroup>
    <StyledFloatGroup>
      <FloatTool icon="style" label="스타일" active />
    </StyledFloatGroup>
    <StyledFloatGroup>
      <FloatTool icon="legend" label="범례" />
      <FloatTool icon="tag" label="데이터 태그" />
      <FloatTool icon="xAxis" label="X 축" />
      <FloatTool icon="yAxis" label="Y 축" />
    </StyledFloatGroup>
    <StyledFloatGroup $last>
      <FloatTool icon="format" label="데이터 포맷" />
    </StyledFloatGroup>
    <StyledFloatSide>
      <Pin />
      <svg width="6" height="32" viewBox="0 0 6 32" fill="#cfcfd3" aria-hidden="true">
        <circle cx="3" cy="4" r="2" />
        <circle cx="3" cy="16" r="2" />
        <circle cx="3" cy="28" r="2" />
      </svg>
      <svg width="20" height="22" viewBox="0 0 20 22" fill="none" stroke="#8a8a8e" strokeWidth="2" aria-hidden="true">
        <path d="M0 9h8V1M12 21v-8h8" />
      </svg>
    </StyledFloatSide>
  </StyledFloatBar>
);

const StylePanel = () => (
  <StyledPanel>
    <StyledPanelHead>
      <h2>범례</h2>
      <Pin />
    </StyledPanelHead>
    <StyledPanelScroll>
      <StyledPanelBody>
        {seriesColors.map((color, i) => (
          <StyledSwatchRow key={color}>
            <StyledSwatch type="button" aria-label={`Series${i + 1}`} $color={color} />
            <StyledSwatchName>{`Series${i + 1}`}</StyledSwatchName>
          </StyledSwatchRow>
        ))}
        <StyledRule $top={8} />
        <StyledPanelTitle>축 색상</StyledPanelTitle>
        <StyledSwatchRow $compact>
          <StyledSwatch type="button" aria-label="축 색상" $color="#000000" />
          <StyledSwatchName>축 색상</StyledSwatchName>
        </StyledSwatchRow>
        <StyledRule $top={17} />
        <StyledPanelTitle>간격</StyledPanelTitle>
        <GapField id="series-gap" label="계열 간격" start={0} max={100} />
        <GapField id="category-gap" label="카테고리 간격" start={25} max={100} />
      </StyledPanelBody>
      <StyledPanelThumb />
    </StyledPanelScroll>
  </StyledPanel>
);

// red boxes and the arrow that joins them
const Marks = () => (
  <StyledMarks width="1651" height="1000" viewBox="539 262 1651 1000" aria-hidden="true">
    <g fill="none" stroke="#e81c1c" strokeWidth="6">
      <rect x="1411" y="326" width="106" height="138" />
      <rect x="1433" y="1071" width="459" height="133" />
      <path d="M1474 466l197 575" />
    </g>
    <path d="M1679 1068l-24-24 28-10z" fill="#e81c1c" stroke="#e81c1c" />
  </StyledMarks>
);

const StatusBar = () => (
  <StyledStatus>
    <StyledViewCell>
      <StyledIconButton type="button" aria-label="페이지 보기">
        <Glyph size={34} box={34} stroke={2.200}>
          <path d="M1.500 7v20M32.500 7v20M7 7h20v20H7z" />
        </Glyph>
      </StyledIconButton>
    </StyledViewCell>
    <StyledPageSelectCell>
      <StyledSelect aria-label="페이지">
        <option>페이지-1</option>
      </StyledSelect>
      <Caret w={13} />
    </StyledPageSelectCell>
    <StyledStatusCell $pad={28}>
      <StyledIconButton type="button" aria-label="페이지 추가">
        <Glyph size={24} box={24} stroke={2}>
          <path d="M12 1v22M1 12h22" />
        </Glyph>
      </StyledIconButton>
    </StyledStatusCell>
    <StyledStatusCell $pad={21}>
      <StyledPageTab href="#page-1">페이지-1</StyledPageTab>
    </StyledStatusCell>
    <StyledStatusRight>
      <StyledStatusCell $pad={16}>형태 수: 1</StyledStatusCell>
      <StyledStatusCell $pad={16}>모양 ID: 123</StyledStatusCell>
      <StyledStatusTools>
        <StyledIconButton type="button" aria-label="레이어" $gap={10}>
          <Glyph size={36} box={36} stroke={2.200}>
            <path d="M18 4l16 10-16 10L2 14zM7 19l-5 3 16 10 16-10-5-3" />
          </Glyph>
          <Caret />
        </StyledIconButton>
        <StyledFocusButton type="button" $gap={17}>
          <Glyph size={30} box={30} stroke={2.200}>
            <path d="M2 8V2h6M22 2h6v6M28 22v6h-6M8 28H2v-6M10 8h6l4 4v10H10z" />
          </Glyph>
          집중
        </StyledFocusButton>
        <StyledIconButton type="button" aria-label="재생">
          <Glyph size={34} box={34} stroke={2.200}>
            <circle cx="17" cy="17" r="15" />
            <path d="M14 11l9 6-9 6z" />
          </Glyph>
        </StyledIconButton>
      </StyledStatusTools>
      <StyledMinus />
    </StyledStatusRight>
  </StyledStatus>
);

const App = () => (
  <StyledApp>
    <GlobalStyle />
    <TitleBar />
    <StyledRibbon>
      {ribbon.map((group) => (
        <StyledGroup key={group.title}>
          <StyledTools>
            {group.tools.map(([icon, label, mode]) => (
              <Tool key={icon} icon={icon} label={label} mode={mode} />
            ))}
          </StyledTools>
          <StyledGroupTitle>{group.title}</StyledGroupTitle>
        </StyledGroup>
      ))}
    </StyledRibbon>
    <StyledBody>
      <StyledRail>
        <StyledCollapse type="button" aria-label="접기">
          <Glyph size={30} box={30} stroke={4}>
            <path d="M14 4L4 15l10 11M27 4L17 15l10 11" />
          </Glyph>
        </StyledCollapse>
        {rail.map(([icon, label]) => (
          <StyledRailItem type="button" key={icon} $active={icon === "railChart"}>
            <StyledRailIcon $active={icon === "railChart"}>{icons[icon]}</StyledRailIcon>
            {label}
          </StyledRailItem>
        ))}
      </StyledRail>
      <Gallery />
      <StyledWork>
        <StyledBoard>
          <StyledPane $line />
          <StyledPane>
            <TopRuler />
          </StyledPane>
          <StyledVTrack>
            <StyledVThumb />
          </StyledVTrack>
          <StyledPane $line>
            <LeftRuler />
          </StyledPane>
          <StyledPane>
            <Sheet />
          </StyledPane>
          <StyledHTrack>
            <StyledHThumb />
          </StyledHTrack>
          <FloatBar />
          <StylePanel />
          <StyledAiPill>
            <StyledIconButton type="button" aria-label="AI 그리기">
              <Wand />
            </StyledIconButton>
            <StyledPillDivider />
            <StyledIconButton type="button" aria-label="AI 도우미">
              <Sparkle id="assistant" />
            </StyledIconButton>
          </StyledAiPill>
          <Marks />
        </StyledBoard>
        <StyledPalette>
          <StyledPaletteTrigger type="button" aria-label="채우기">
            <Glyph size={30} box={30} stroke={2.400}>
              <path d="M12 2l2 5M4 16L14 6l9 10-10 11z" />
              <path d="M4 16h19L13 27z" fill="currentColor" />
              <path d="M26 22v3" stroke={GREY} strokeWidth="5" />
            </Glyph>
            <Caret />
          </StyledPaletteTrigger>
          <StyledColors>
            {palette.map((color) => (
              <StyledColor type="button" key={color} aria-label={`#${color}`} $color={`#${color}`} />
            ))}
          </StyledColors>
        </StyledPalette>
      </StyledWork>
    </StyledBody>
    <StatusBar />
    <StyledKeyHint>
      <Glyph size={22} box={22} stroke={2}>
        <path d="M11 3v16M5 13l6 6 6-6" />
      </Glyph>
      꿀뷰
    </StyledKeyHint>
  </StyledApp>
);

export default App;
